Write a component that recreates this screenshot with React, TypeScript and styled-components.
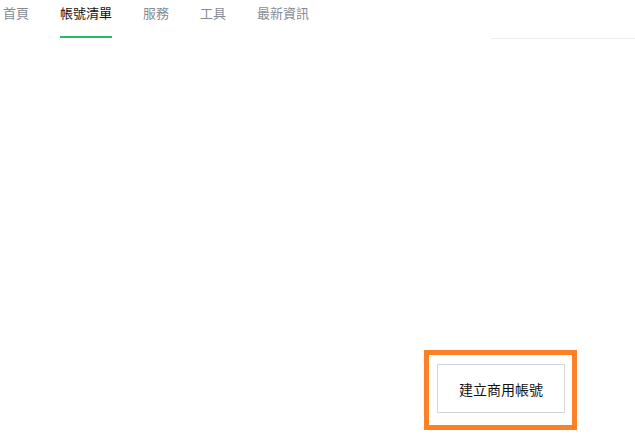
import styled, { createGlobalStyle } from 'styled-components';

const tabs = ['首頁', '帳號清單', '服務', '工具', '最新資訊'];
const activeTab = 1;

const GlobalStyle = createGlobalStyle`
  body {
    margin: 0;
    background: #fff;
    font-family: 'Noto Sans CJK TC', 'Noto Sans', sans-serif;
  }
`;

const Page = styled.div`
  width: 635px;
  height: 446px;
  overflow: hidden;
`;

const NavBar = styled.nav`
  display: flex;
  align-items: flex-end;
  height: 39px;
  padding-left: 3px;
`;

const TabList = styled.ul`
  display: flex;
  gap: 31px;
  margin: 0;
  padding: 0;
  list-style: none;
  flex: 1;
  align-self: stretch;
`;

const Tab = styled.li<{ $active?: boolean }>`
  display: flex;
  align-items: center;
  box-sizing: border-box;
  height: 38px;
  padding-bottom: 12px;
  font-size: 13px;
  line-height: 1;
  color: ${({ $active }) => ($active ? '#111' : '#858b94')};
  border-bottom: 2px solid
    ${({ $active }) => ($active ? '#1fbf5f' : 'transparent')};
  cursor: pointer;
`;

const SearchSlot = styled.div`
  width: 144px;
  height: 1px;
  background: #ececec;
`;

const Main = styled.main`
  display: flex;
  justify-content: flex-end;
  padding: 311px 58px 0 0;
`;

const Highlight = styled.div`
  border: 5px solid #fd8027;
  padding: 9px 7px 12px 8px;
`;

const CreateButton = styled.button`
  width: 128px;
  height: 49px;
  border: 1px solid #d4d6da;
  background: #fff;
  font-family: inherit;
  font-size: 14px;
  color: #111;
  cursor: pointer;
`;

export default function App() {
  return (
    <Page>
      <GlobalStyle />
      <NavBar>
        <TabList>
          {tabs.map((t, i) => (
            <Tab key={t} $active={i === activeTab}>
              {t}
            </Tab>
          ))}
        </TabList>
        <SearchSlot />
      </NavBar>
      <Main>
        <Highlight>
          <CreateButton>建立商用帳號</CreateButton>
        </Highlight>
      </Main>
    </Page>
  );
}
